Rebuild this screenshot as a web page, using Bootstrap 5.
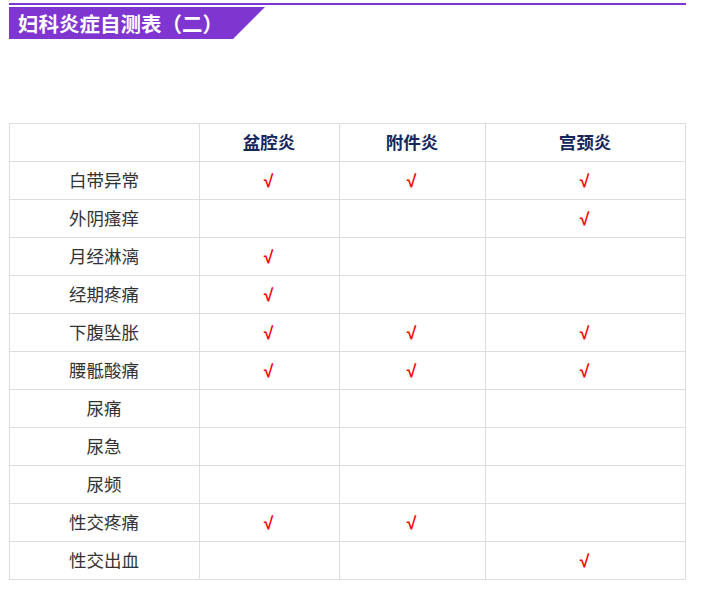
<!DOCTYPE html>
<html lang="zh">
<head>
<meta charset="utf-8">
<title>妇科炎症自测表（二）</title>
<link href="https://cdn.jsdelivr.net/npm/bootstrap@5.3.0/dist/css/bootstrap.min.css" rel="stylesheet">
<style>
body { background:#fff; font-family:"Microsoft YaHei","Noto Sans CJK SC","Liberation Sans",sans-serif; }
.page-wrap { padding:3px 23px 0 9px; }
.title-wrap { border-top:2px solid #7f35cf; padding-top:2px; margin-bottom:84px; }
.title-tag { width:256px; height:32px; line-height:33px; background:#7f35cf; color:#fff; font-size:20.5px; font-weight:700; padding-left:9px; margin:0; clip-path:polygon(0 0,100% 0,224px 100%,0 100%); }
.sym-table { table-layout:fixed; width:677px; margin:0; border-color:#ddd; font-size:17.5px; color:#333; }
.sym-table th, .sym-table td { height:38px; padding:0 1px 2px 0; vertical-align:middle; text-align:center; border:1px solid #ddd; line-height:34px; }
.sym-table th { color:#14265c; font-weight:700; }
.c1 { width:190px; } .c2 { width:140px; } .c3 { width:146px; }
.sym-table td.tick { color:#f00; font-family:"Liberation Sans",sans-serif; font-size:17.5px; font-weight:700; padding:1px 2px 0 0; }
</style>
</head>
<body>
<div class="page-wrap">
  <div class="title-wrap"><h1 class="title-tag">妇科炎症自测表（二）</h1></div>
  <table class="table table-bordered sym-table">
    <colgroup><col class="c1"><col class="c2"><col class="c3"><col></colgroup>
    <thead><tr><th></th><th>盆腔炎</th><th>附件炎</th><th>宫颈炎</th></tr></thead>
    <tbody>
      <tr><td>白带异常</td><td class="tick">√</td><td class="tick">√</td><td class="tick">√</td></tr>
      <tr><td>外阴瘙痒</td><td></td><td></td><td class="tick">√</td></tr>
      <tr><td>月经淋漓</td><td class="tick">√</td><td></td><td></td></tr>
      <tr><td>经期疼痛</td><td class="tick">√</td><td></td><td></td></tr>
      <tr><td>下腹坠胀</td><td class="tick">√</td><td class="tick">√</td><td class="tick">√</td></tr>
      <tr><td>腰骶酸痛</td><td class="tick">√</td><td class="tick">√</td><td class="tick">√</td></tr>
      <tr><td>尿痛</td><td></td><td></td><td></td></tr>
      <tr><td>尿急</td><td></td><td></td><td></td></tr>
      <tr><td>尿频</td><td></td><td></td><td></td></tr>
      <tr><td>性交疼痛</td><td class="tick">√</td><td class="tick">√</td><td></td></tr>
      <tr><td>性交出血</td><td></td><td></td><td class="tick">√</td></tr>
    </tbody>
  </table>
</div>
<script src="https://cdn.jsdelivr.net/npm/bootstrap@5.3.0/dist/js/bootstrap.bundle.min.js"></script>
</body>
</html>
